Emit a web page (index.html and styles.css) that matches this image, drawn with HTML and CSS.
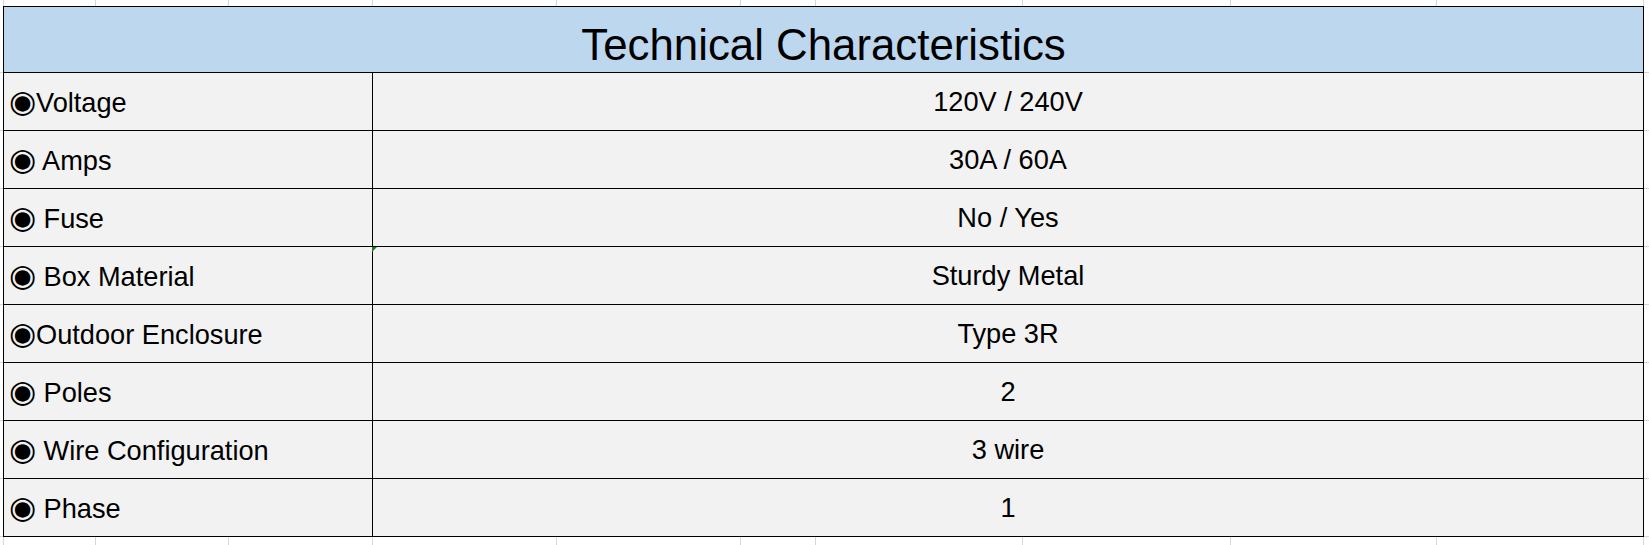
FILE: index.html
```html
<!DOCTYPE html>
<html lang="en">
<head>
<meta charset="utf-8">
<title>Technical Characteristics</title>
<link rel="stylesheet" href="styles.css">
</head>
<body>
<div class="sheet">
  <div class="spec">
    <div class="title">Technical Characteristics</div>
    <div class="label"><span class="dot">◉</span>Voltage</div>
    <div class="value">120V / 240V</div>
    <div class="label"><span class="dot">◉</span> Amps</div>
    <div class="value">30A / 60A</div>
    <div class="label"><span class="dot">◉</span> Fuse</div>
    <div class="value">No / Yes</div>
    <div class="label"><span class="dot">◉</span> Box Material</div>
    <div class="value flag">Sturdy Metal</div>
    <div class="label"><span class="dot">◉</span>Outdoor Enclosure</div>
    <div class="value">Type 3R</div>
    <div class="label"><span class="dot">◉</span> Poles</div>
    <div class="value">2</div>
    <div class="label"><span class="dot">◉</span> Wire Configuration</div>
    <div class="value">3 wire</div>
    <div class="label"><span class="dot">◉</span> Phase</div>
    <div class="value">1</div>
  </div>
</div>
</body>
</html>
```

FILE: styles.css
```css
html {
  height: 100%;
  background:
    linear-gradient(#d0d7e5, #d0d7e5) 3px 0 / 1px 100% no-repeat,
    linear-gradient(#d0d7e5, #d0d7e5) 95px 0 / 1px 100% no-repeat,
    linear-gradient(#d0d7e5, #d0d7e5) 228px 0 / 1px 100% no-repeat,
    linear-gradient(#d0d7e5, #d0d7e5) 372px 0 / 1px 100% no-repeat,
    linear-gradient(#d0d7e5, #d0d7e5) 556px 0 / 1px 100% no-repeat,
    linear-gradient(#d0d7e5, #d0d7e5) 740px 0 / 1px 100% no-repeat,
    linear-gradient(#d0d7e5, #d0d7e5) 815px 0 / 1px 100% no-repeat,
    linear-gradient(#d0d7e5, #d0d7e5) 1022px 0 / 1px 100% no-repeat,
    linear-gradient(#d0d7e5, #d0d7e5) 1230px 0 / 1px 100% no-repeat,
    linear-gradient(#d0d7e5, #d0d7e5) 1436px 0 / 1px 100% no-repeat,
    linear-gradient(#d0d7e5, #d0d7e5) 1643px 0 / 1px 100% no-repeat,
    linear-gradient(#d0d7e5, #d0d7e5) 0 72px / 100% 1px no-repeat,
    linear-gradient(#d0d7e5, #d0d7e5) 0 130px / 100% 1px no-repeat,
    linear-gradient(#d0d7e5, #d0d7e5) 0 188px / 100% 1px no-repeat,
    linear-gradient(#d0d7e5, #d0d7e5) 0 246px / 100% 1px no-repeat,
    linear-gradient(#d0d7e5, #d0d7e5) 0 304px / 100% 1px no-repeat,
    linear-gradient(#d0d7e5, #d0d7e5) 0 362px / 100% 1px no-repeat,
    linear-gradient(#d0d7e5, #d0d7e5) 0 420px / 100% 1px no-repeat,
    linear-gradient(#d0d7e5, #d0d7e5) 0 478px / 100% 1px no-repeat,
    linear-gradient(#d0d7e5, #d0d7e5) 0 536px / 100% 1px no-repeat,
    #ffffff;
}

body {
  margin: 0;
  font-family: "Liberation Sans", Arial, sans-serif;
  color: #000;
}

.sheet {
  padding: 6px 0 0 3px;
}

.spec {
  display: grid;
  grid-template-columns: 368px 1270px;
  grid-template-rows: 65px repeat(8, 57px);
  gap: 1px;
  width: max-content;
  background: #000;
  border: 1px solid #000;
}

.title {
  grid-column: 1 / -1;
  background: #bdd7ee;
  text-align: center;
  font-size: 43.8px;
  padding-top: 13px;
  white-space: nowrap;
}

.label,
.value {
  background: #f2f2f2;
  font-size: 27.2px;
  padding-top: 13px;
  white-space: nowrap;
}

.value {
  text-align: center;
}

.dot {
  display: inline-block;
  width: 32px;
  text-align: right;
  font-family: "DejaVu Sans", sans-serif;
  font-size: 31px;
  line-height: 1;
}

.flag {
  position: relative;
}

.flag::before {
  content: "";
  position: absolute;
  left: -1px;
  top: 0;
  border-style: solid;
  border-width: 5px 5px 0 0;
  border-color: #1c7f1c transparent transparent transparent;
}
```
